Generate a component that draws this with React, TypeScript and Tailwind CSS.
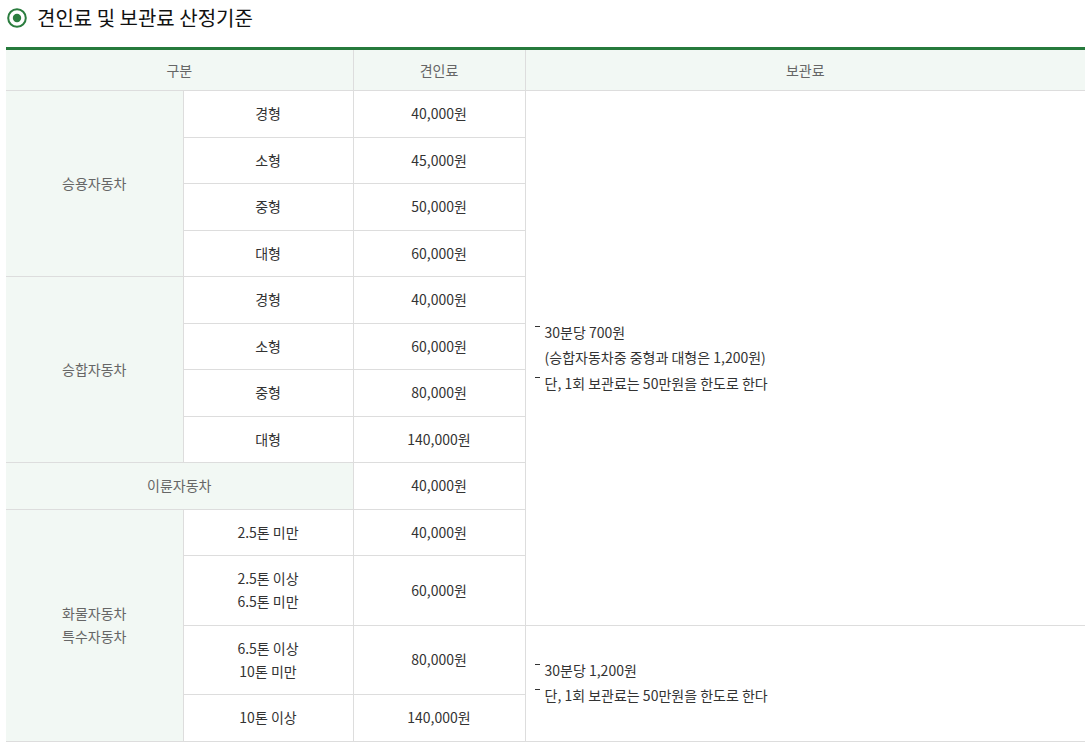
const font = { fontFamily: '"Noto Sans CJK KR", "Noto Sans", sans-serif' };

type Row = { cat?: { label: string[]; span: number; colSpan?: number }; size?: string[]; fee: string };

const rows: Row[] = [
  { cat: { label: ["승용자동차"], span: 4 }, size: ["경형"], fee: "40,000원" },
  { size: ["소형"], fee: "45,000원" },
  { size: ["중형"], fee: "50,000원" },
  { size: ["대형"], fee: "60,000원" },
  { cat: { label: ["승합자동차"], span: 4 }, size: ["경형"], fee: "40,000원" },
  { size: ["소형"], fee: "60,000원" },
  { size: ["중형"], fee: "80,000원" },
  { size: ["대형"], fee: "140,000원" },
  { cat: { label: ["이륜자동차"], span: 1, colSpan: 2 }, fee: "40,000원" },
  { cat: { label: ["화물자동차", "특수자동차"], span: 4 }, size: ["2.5톤 미만"], fee: "40,000원" },
  { size: ["2.5톤 이상", "6.5톤 미만"], fee: "60,000원" },
  { size: ["6.5톤 이상", "10톤 미만"], fee: "80,000원" },
  { size: ["10톤 이상"], fee: "140,000원" },
];

const Dash = () => <span className="absolute left-[-10px] top-[6px] h-px w-[5px] bg-[#333]" />;

const Storage = ({ items }: { items: string[][] }) => (
  <ul className="pl-[19px] text-left leading-[25.5px]">
    {items.map((lines, i) => (
      <li key={i} className="relative">
        <Dash />
        {lines.map((l, j) => (
          <div key={j}>{l}</div>
        ))}
      </li>
    ))}
  </ul>
);

export default function App() {
  const td = "border border-[#dddddd] py-[11.25px] leading-[23px] text-center align-middle";
  return (
    <div className="bg-white px-[6px] pt-[4px] text-[14px] text-[#333]" style={font}>
      <h3 className="flex items-center gap-[10px] pl-[1px] text-[20px] leading-[28px] text-[#111]">
        <svg width="20" height="20" viewBox="0 0 20 20">
          <circle cx="10" cy="10" r="8.8" fill="none" stroke="#2b7d3f" strokeWidth="2" />
          <circle cx="10" cy="10" r="4.2" fill="#2b7d3f" />
        </svg>
        <span>견인료 및 보관료 산정기준</span>
      </h3>
      <table className="mt-[15px] w-[1079px] table-fixed border-collapse border-t-[3px] border-t-[#267a3c]">
        <colgroup>
          <col className="w-[177px]" />
          <col className="w-[170px]" />
          <col className="w-[172px]" />
          <col />
        </colgroup>
        <thead>
          <tr className="bg-[#f2f8f4] text-[#666]">
            <th colSpan={2} className="border-x border-b border-[#dddddd] border-l-0 py-[8.5px] font-normal leading-[23px]">구분</th>
            <th className="border-x border-b border-[#dddddd] py-[8.5px] font-normal leading-[23px]">견인료</th>
            <th className="border-b border-l border-[#dddddd] py-[8.5px] font-normal leading-[23px]">보관료</th>
          </tr>
        </thead>
        <tbody>
          {rows.map((r, i) => (
            <tr key={i}>
              {r.cat && (
                <td
                  rowSpan={r.cat.span}
                  colSpan={r.cat.colSpan}
                  className={`${td} border-l-0 bg-[#f2f8f4] text-[#666]`}
                >
                  {r.cat.label.map((l) => (
                    <div key={l}>{l}</div>
                  ))}
                </td>
              )}
              {r.size && (
                <td className={td}>
                  {r.size.map((l) => (
                    <div key={l}>{l}</div>
                  ))}
                </td>
              )}
              <td className={td}>{r.fee}</td>
              {i === 0 && (
                <td rowSpan={11} className="border-y border-l border-[#dddddd] align-middle">
                  <Storage
                    items={[
                      ["30분당 700원", "(승합자동차중 중형과 대형은 1,200원)"],
                      ["단, 1회 보관료는 50만원을 한도로 한다"],
                    ]}
                  />
                </td>
              )}
              {i === 11 && (
                <td rowSpan={2} className="border-y border-l border-[#dddddd] align-middle">
                  <Storage items={[["30분당 1,200원"], ["단, 1회 보관료는 50만원을 한도로 한다"]]} />
                </td>
              )}
            </tr>
          ))}
        </tbody>
      </table>
    </div>
  );
}
